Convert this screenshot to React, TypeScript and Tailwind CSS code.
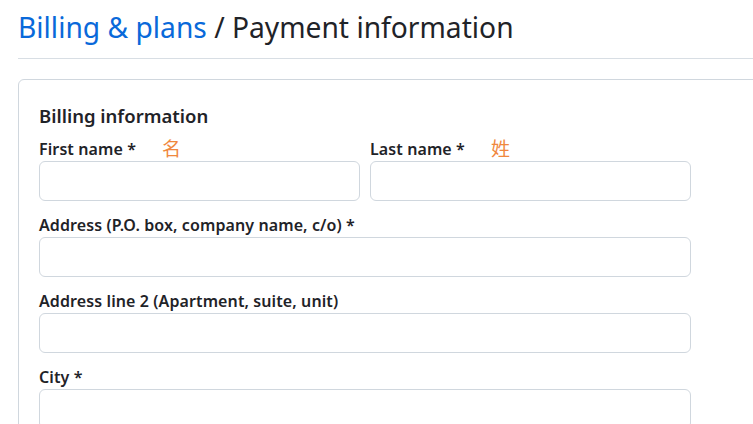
// Billing & plans / Payment information — billing form

const FONT = "font-['Noto_Sans','Noto_Sans_CJK_SC',sans-serif]";

function Field({ label, note, className = '' }: { label: string; note?: string; className?: string }) {
  return (
    <div className={`flex flex-col ${className}`}>
      <label className="flex items-center h-[23px] text-[16px] font-semibold text-[#1f2328] leading-[23px] tracking-[0.1px]">
        <span>{label}</span>
        {note && <span className="ml-[26px] text-[19px] font-normal text-[#f0883e]">{note}</span>}
      </label>
      <input className="h-[40px] w-full rounded-[6px] border border-[#d0d7de] bg-white outline-none" />
    </div>
  );
}

export default function App() {
  return (
    <div className={`${FONT} w-[753px] h-[424px] overflow-hidden bg-white pl-[18px]`}>
      <h1 className="pt-[6px] pb-[10px] text-[28.2px] leading-[42px] font-normal text-[#1f2328] border-b border-[#d8dee4]">
        <a className="text-[#0969da]">Billing &amp; plans</a> / Payment information
      </h1>

      <div className="mt-[20px] w-[760px] rounded-tl-[6px] border border-[#d0d7de] pt-[23px] pl-[20px]">
        <h2 className="text-[18.5px] leading-[26px] font-semibold text-[#1f2328] mb-[9px]">Billing information</h2>

        <div className="w-[652px] flex flex-col gap-[13px]">
          <div className="grid grid-cols-2 gap-[10px]">
            <Field label="First name *" note="名" />
            <Field label="Last name *" note="姓" />
          </div>
          <Field label="Address (P.O. box, company name, c/o) *" />
          <Field label="Address line 2 (Apartment, suite, unit)" />
          <Field label="City *" />
        </div>
      </div>
    </div>
  );
}
